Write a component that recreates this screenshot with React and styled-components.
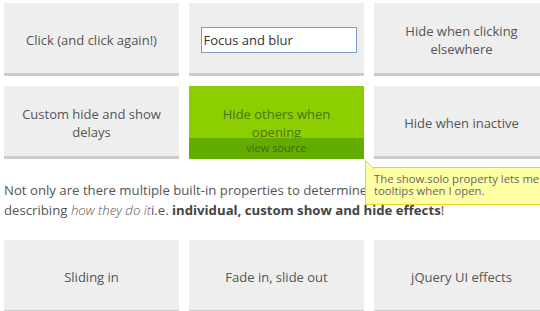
import React from "react";
import styled, { createGlobalStyle } from "styled-components";

const GlobalStyle = createGlobalStyle`
  html, body {
    margin: 0;
    padding: 0;
    background: #fff;
    overflow: hidden;
  }
  body {
    font-family: "Open Sans", "Liberation Sans", sans-serif;
    color: #555;
  }
`;

const Page = styled.div`
  position: relative;
  width: 545px;
  padding: 3px 0 0 4px;
`;

const Grid = styled.div`
  display: grid;
  grid-template-columns: repeat(3, 175px);
  gap: 10px;
`;

const Box = styled.div`
  position: relative;
  box-sizing: border-box;
  height: 73px;
  padding: 3px 14px 0;
  display: flex;
  align-items: center;
  justify-content: center;
  text-align: center;
  font-size: 13px;
  line-height: 18px;
  color: ${(p) => (p.$active ? "#4a7410" : "#555")};
  background: ${(p) => (p.$active ? "#8dce00" : "#eeeeee")};
  border-bottom: 3px solid ${(p) => (p.$active ? "#62ad00" : "#cccccc")};
  overflow: hidden;
`;

const Input = styled.input`
  width: 156px;
  height: 26px;
  margin-left: 4px;
  box-sizing: border-box;
  border: 1px solid #7f9db9;
  background: #fff;
  padding: 0 2px;
  font-family: "Open Sans", "Liberation Sans", sans-serif;
  font-size: 13px;
  color: #333;
  outline: none;
`;

const Source = styled.div`
  position: absolute;
  left: 0;
  right: 0;
  bottom: -3px;
  height: 21px;
  background: #62ad00;
  color: #3f6a0e;
  font-size: 11px;
  line-height: 19px;
  text-align: center;
`;

const Text = styled.p`
  margin: 21px 0 20px;
  font-size: 13.2px;
  line-height: 20px;
  color: #555;
  white-space: nowrap;

  em {
    font-style: italic;
    font-weight: 300;
  }
  strong {
    font-weight: 700;
    color: #444;
  }
`;

const Tooltip = styled.div`
  position: absolute;
  left: 365px;
  top: 167px;
  width: 220px;
  box-sizing: border-box;
  padding: 5px 8px 7px;
  background: #ffffa3;
  border: 1px solid #f1d031;
  color: #666;
  font-size: 11.3px;
  line-height: 12px;
  white-space: nowrap;
`;

const Tip = styled.svg`
  position: absolute;
  left: -1px;
  top: -8px;
`;

export default function App() {
  return (
    <>
      <GlobalStyle />
      <Page>
        <Grid>
          <Box>Click (and click again!)</Box>
          <Box>
            <Input defaultValue="Focus and blur" />
          </Box>
          <Box>Hide when clicking elsewhere</Box>
          <Box>Custom hide and show delays</Box>
          <Box $active>
            Hide others when opening
            <Source>view source</Source>
          </Box>
          <Box>Hide when inactive</Box>
        </Grid>
        <Text>
          Not only are there multiple built-in properties to determine <em>when</em> tooltips show and hide, but also
          <br />
          describing <em>how they do it</em>i.e. <strong>individual, custom show and hide effects</strong>!
        </Text>
        <Grid>
          <Box>Sliding in</Box>
          <Box>Fade in, slide out</Box>
          <Box>jQuery UI effects</Box>
        </Grid>
        <Tooltip>
          <Tip width="10" height="9" viewBox="0 0 10 9">
            <polygon points="0.5,0.5 0.5,9 9,9" fill="#ffffa3" />
            <polyline points="0.5,9 0.5,0.5 9,9" fill="none" stroke="#f1d031" strokeWidth="1" />
          </Tip>
          The show.solo property lets me hide other
          <br />
          tooltips when I open.
        </Tooltip>
      </Page>
    </>
  );
}
